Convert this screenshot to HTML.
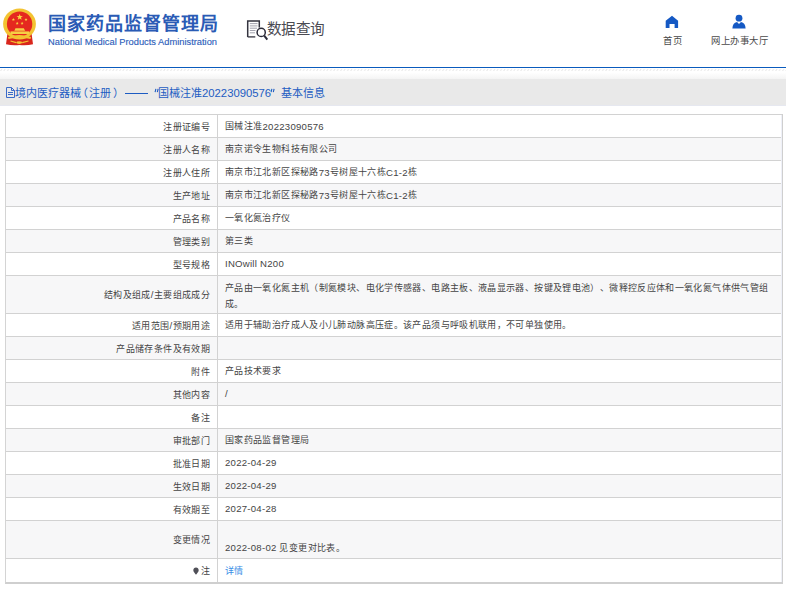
<!DOCTYPE html>
<html lang="zh-CN"><head><meta charset="utf-8">
<style>
*{margin:0;padding:0;box-sizing:border-box}
html,body{width:786px;height:589px;overflow:hidden;background:#fff}
body{position:relative;font-family:"Liberation Sans",sans-serif;color:#444;text-spacing-trim:space-all}
.abs{position:absolute}
#blue{position:absolute;left:0;top:67px;width:786px;height:1px;background:#0a5bbd}
#hatch{position:absolute;left:0;top:69px;width:786px;height:2px;
 background:repeating-linear-gradient(135deg,#fff 0 1.2px,#e2e2e2 1.2px 2.2px)}
#grad{position:absolute;left:0;top:71px;width:786px;height:8px;background:linear-gradient(#fff 20%,#f4f4f4)}
#band{position:absolute;left:0;top:79px;width:786px;height:27px;background:#e9e9e9}
.ts{position:absolute;top:86px;font-size:11px;line-height:14px;color:#1d5cc2;white-space:nowrap}
.tl{font-size:11.3px}
#tbl{position:absolute;left:5px;top:114px;width:778px;height:470px;border-left:1px solid #d4d4d4;border-right:1px solid #cfcfcf;border-bottom:2px solid #cfcfcf}
.r{position:absolute;left:6px;width:776px;border-top:1px solid #d2d2d2}
.k{position:absolute;left:0;top:0;width:212px;height:100%;border-right:1px solid #d2d2d2;padding-right:7px;font-size:9px;letter-spacing:0.37px;display:flex;align-items:center;justify-content:flex-end;white-space:nowrap}
.v{position:absolute;left:212px;top:0;right:0;height:100%;padding-left:7px;font-size:9px;letter-spacing:0.37px;display:flex;align-items:center;line-height:17px;white-space:nowrap}
.l{font-size:9.6px;letter-spacing:0.25px}
.lat{padding-bottom:2px}
.ml{padding-top:2px;line-height:16px}
.link{color:#3a8ee6;position:relative;top:1px}
.chg{position:relative;top:8px}
.pin{display:inline-block;margin-right:1.5px;position:relative;top:0.5px}
</style></head><body>
<svg class="abs" style="left:0px;top:0px" width="40" height="50" viewBox="0 0 40 50">
 <path d="M7.5 33 L6 44.3 Q12 45.6 19.5 45 Q27 45.6 33 44.3 L31.5 33 Z" fill="#d9261c"/>
 <ellipse cx="19.5" cy="24" rx="16.4" ry="15.6" fill="#f3c332"/>
 <ellipse cx="19.6" cy="24" rx="12.7" ry="12.6" fill="#e5291f"/>
 <polygon points="19.70,13.90 20.49,16.11 22.84,16.18 20.98,17.62 21.64,19.87 19.70,18.55 17.76,19.87 18.42,17.62 16.56,16.18 18.91,16.11" fill="#f8d640"/>
 <polygon points="13.40,18.00 13.81,19.03 14.92,19.11 14.07,19.82 14.34,20.89 13.40,20.30 12.46,20.89 12.73,19.82 11.88,19.11 12.99,19.03" fill="#f8d640"/>
 <polygon points="26.00,18.00 26.41,19.03 27.52,19.11 26.67,19.82 26.94,20.89 26.00,20.30 25.06,20.89 25.33,19.82 24.48,19.11 25.59,19.03" fill="#f8d640"/>
 <polygon points="17.20,21.80 17.61,22.83 18.72,22.91 17.87,23.62 18.14,24.69 17.20,24.10 16.26,24.69 16.53,23.62 15.68,22.91 16.79,22.83" fill="#f8d640"/>
 <polygon points="22.10,21.80 22.51,22.83 23.62,22.91 22.77,23.62 23.04,24.69 22.10,24.10 21.16,24.69 21.43,23.62 20.58,22.91 21.69,22.83" fill="#f8d640"/>
 <path d="M14.3 30.8 L15.5 28.2 L23.8 28.2 L25.2 30.8 Z" fill="#f6cf45"/>
 <rect x="10.5" y="31.4" width="18.6" height="2.6" fill="#f6cf45"/>
 <path d="M8 37 Q19.5 33.2 31 37 L30.5 39 Q19.5 36 8.5 39 Z" fill="#f3c332"/>
 <ellipse cx="19.2" cy="42.6" rx="3" ry="1.4" fill="#f3c332"/>
 <path d="M10.5 41 L16.2 42.6 M28.5 41 L22.2 42.6" stroke="#f3c332" stroke-width="1.2"/>
</svg>
<div class="abs" style="left:48px;top:13px;font-size:18px;font-weight:bold;color:#2a5bb5;letter-spacing:1.05px;white-space:nowrap;line-height:22px">国家药品监督管理局</div>
<div class="abs" style="left:48px;top:36px;font-size:9.3px;color:#2f5fbb;-webkit-text-stroke:0.15px #2f5fbb;white-space:nowrap;line-height:12px">National Medical Products Administration</div>
<svg class="abs" style="left:246px;top:19px" width="24" height="23" viewBox="0 0 24 23">
 <path d="M1.7 18 V2 H13.3 V8.5" fill="none" stroke="#34343f" stroke-width="1.5"/>
 <path d="M1.7 17.9 H9.3" stroke="#34343f" stroke-width="1.3"/>
 <path d="M3.8 4.6 H11.5 M3.8 6.9 H11.5 M3.8 9.2 H11 M3.8 11.5 H9.5 M3.8 13.8 H9" stroke="#9a9aa6" stroke-width="0.9"/>
 <circle cx="15.2" cy="13.4" r="4.1" fill="#fff" stroke="#2c2c3a" stroke-width="1.5"/>
 <path d="M18.2 16.6 L21.3 20.6" stroke="#2c2c3a" stroke-width="2"/>
</svg>
<div class="abs" style="left:267px;top:19px;font-size:14.6px;letter-spacing:-0.6px;color:#4a4a52;white-space:nowrap;line-height:20px">数据查询</div>
<svg class="abs" style="left:665px;top:15px" width="14" height="14" viewBox="0 0 14 14">
 <path d="M0.7 5.7 L7 0.8 L13.1 5.7 V13 H9.6 V9.1 H4.5 V13 H0.7 Z" fill="#1559c4"/>
</svg>
<div class="abs" style="left:662.5px;top:35px;font-size:9.4px;letter-spacing:1px;color:#4a4a4a;white-space:nowrap;line-height:12px">首页</div>
<svg class="abs" style="left:731px;top:14px" width="16" height="16" viewBox="0 0 16 16">
 <circle cx="8" cy="4.2" r="3.4" fill="#1559c4"/>
 <path d="M1.4 14.6 Q1.6 8.6 6 8 L8 10 L10 8 Q14.4 8.6 14.6 14.6 Z" fill="#1559c4"/>
</svg>
<div class="abs" style="left:711px;top:35px;font-size:9.4px;letter-spacing:0.5px;color:#4a4a4a;white-space:nowrap;line-height:12px">网上办事大厅</div>
<div id="blue"></div><svg class="abs" style="left:0;top:69px" width="786" height="2"><defs><pattern id="hp" width="3.4" height="2" patternUnits="userSpaceOnUse"><path d="M0.3 2 L2.1 0" stroke="#d4d4d4" stroke-width="0.8"/></pattern></defs><rect width="786" height="2" fill="url(#hp)"/></svg><div id="grad"></div><div id="band"></div>
<svg class="abs" style="left:6px;top:87px" width="9" height="11" viewBox="0 0 9 11">
 <path d="M0.5 0.5 H5.5 L8.5 3.5 V10.5 H0.5 Z M5.5 0.5 V3.5 H8.5 M2 5.5 H7 M2 7.5 H7" fill="none" stroke="#3a6ac8" stroke-width="1"/>
</svg>
<span class="ts " style="left:15px">境内医疗器械</span><span class="ts " style="left:77px">（</span><span class="ts " style="left:89px">注册</span><span class="ts " style="left:113px">）</span><div class="abs" style="left:125px;top:93px;width:23px;height:1px;background:#1d5cc2"></div><svg class="abs" style="left:154px;top:88px" width="5" height="5" viewBox="0 0 5 5"><path d="M1.9 0.8 L1.1 4.2 M4.1 0.8 L3.3 4.2" stroke="#1d5cc2" stroke-width="1.1"/></svg><span class="ts " style="left:158px">国械注准<span class="tl">20223090576</span></span><svg class="abs" style="left:270px;top:88px" width="5" height="5" viewBox="0 0 5 5"><path d="M1.9 0.8 L1.1 4.2 M4.1 0.8 L3.3 4.2" stroke="#1d5cc2" stroke-width="1.1"/></svg><span class="ts " style="left:281px">基本信息</span>
<div id="tbl"></div>
<div class="abs" style="left:0;top:105px;width:786px;height:1px;background:#e6e8f0"></div>
<div class="r" style="top:114px;height:23px;background:#fff"><div class="k">注册证编号</div><div class="v">国械注准<span class="l">20223090576</span></div></div>
<div class="r" style="top:137px;height:23px;background:#f7f7f8"><div class="k">注册人名称</div><div class="v">南京诺令生物科技有限公司</div></div>
<div class="r" style="top:160px;height:23px;background:#fff"><div class="k">注册人住所</div><div class="v">南京市江北新区探秘路<span class="l">73</span>号树屋十六栋<span class="l">C1-2</span>栋</div></div>
<div class="r" style="top:183px;height:23px;background:#f7f7f8"><div class="k">生产地址</div><div class="v">南京市江北新区探秘路<span class="l">73</span>号树屋十六栋<span class="l">C1-2</span>栋</div></div>
<div class="r" style="top:206px;height:23px;background:#fff"><div class="k">产品名称</div><div class="v">一氧化氮治疗仪</div></div>
<div class="r" style="top:229px;height:23px;background:#f7f7f8"><div class="k">管理类别</div><div class="v">第三类</div></div>
<div class="r" style="top:252px;height:23px;background:#fff"><div class="k">型号规格</div><div class="v lat"><span class="l">INOwill N200</span></div></div>
<div class="r" style="top:275px;height:38px;background:#f7f7f8"><div class="k">结构及组成<span class="l">/</span>主要组成成分</div><div class="v ml">产品由一氧化氮主机（制氮模块、电化学传感器、电路主板、液晶显示器、按键及锂电池）、微释控反应体和一氧化氮气体供气管组<br>成。</div></div>
<div class="r" style="top:313px;height:23px;background:#fff"><div class="k">适用范围<span class="l">/</span>预期用途</div><div class="v">适用于辅助治疗成人及小儿肺动脉高压症。该产品须与呼吸机联用，不可单独使用。</div></div>
<div class="r" style="top:336px;height:23px;background:#f7f7f8"><div class="k">产品储存条件及有效期</div><div class="v"></div></div>
<div class="r" style="top:359px;height:23px;background:#fff"><div class="k">附件</div><div class="v">产品技术要求</div></div>
<div class="r" style="top:382px;height:23px;background:#f7f7f8"><div class="k">其他内容</div><div class="v lat"><span class="l">/</span></div></div>
<div class="r" style="top:405px;height:23px;background:#fff"><div class="k">备注</div><div class="v"></div></div>
<div class="r" style="top:428px;height:23px;background:#f7f7f8"><div class="k">审批部门</div><div class="v">国家药品监督管理局</div></div>
<div class="r" style="top:451px;height:23px;background:#fff"><div class="k">批准日期</div><div class="v lat"><span class="l">2022-04-29</span></div></div>
<div class="r" style="top:474px;height:23px;background:#f7f7f8"><div class="k">生效日期</div><div class="v lat"><span class="l">2022-04-29</span></div></div>
<div class="r" style="top:497px;height:23px;background:#fff"><div class="k">有效期至</div><div class="v lat"><span class="l">2027-04-28</span></div></div>
<div class="r" style="top:520px;height:38px;background:#f7f7f8"><div class="k">变更情况</div><div class="v"><span class='chg'><span class="l">2022-08-02</span> 见变更对比表。</span></div></div>
<div class="r" style="top:558px;height:24px;background:#fff"><div class="k"><svg class='pin' width='6' height='8' viewBox='0 0 6 8'><path d='M3 0.4 C1.4 0.4 0.3 1.6 0.3 3.2 C0.3 4.9 2 6.2 3 7.8 C4 6.2 5.7 4.9 5.7 3.2 C5.7 1.6 4.6 0.4 3 0.4 Z' fill='#505058'/></svg>注</div><div class="v"><span class='link'>详情</span></div></div>
<div class="abs" style="left:781px;top:115px;width:1px;height:467px;background:#eef0f8"></div>
</body></html>
